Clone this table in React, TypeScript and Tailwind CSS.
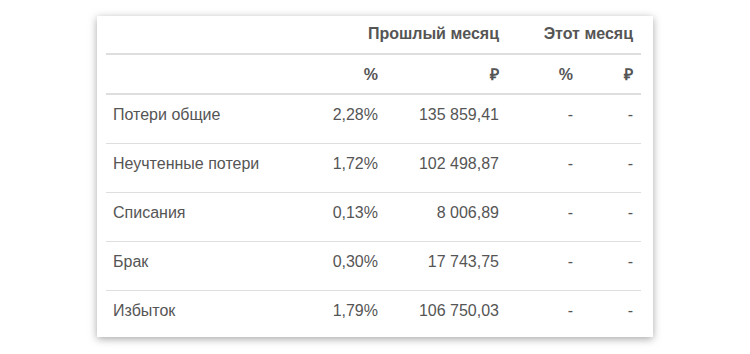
import React from "react";

const rows = [
  ["Потери общие", "2,28%", "135 859,41"],
  ["Неучтенные потери", "1,72%", "102 498,87"],
  ["Списания", "0,13%", "8 006,89"],
  ["Брак", "0,30%", "17 743,75"],
  ["Избыток", "1,79%", "106 750,03"],
];

export default function App() {
  return (
    <div
      className="w-[750px] h-[354px] bg-white overflow-hidden text-[#555]"
      style={{ fontFamily: '"Liberation Sans", Arial, sans-serif' }}
    >
      <div className="ml-[97px] mt-[16px] w-[556px] h-[321px] bg-white shadow-[0_2px_8px_rgba(0,0,0,0.35)] pl-[9px] pr-[12px]">
        <div className="text-[16px] leading-[20px]">
          <div className="flex h-[39px] pt-[8px] border-b-2 border-[#dedede] font-bold">
            <div className="flex-1" />
            <div className="w-[195px] text-right pr-[7px]">Прошлый месяц</div>
            <div className="w-[135px] text-right pr-[8px]">Этот месяц</div>
          </div>
          <div className="flex h-[40px] pt-[10px] border-b-2 border-[#dedede] font-bold">
            <div className="flex-1" />
            <div className="w-[75px] text-right pr-[8px]">%</div>
            <div className="w-[120px] text-right pr-[7px]">₽</div>
            <div className="w-[75px] text-right pr-[8px]">%</div>
            <div className="w-[60px] text-right pr-[8px]">₽</div>
          </div>
          {rows.map((r, i) => (
            <div
              key={i}
              className={
                "flex pt-[10px] " +
                (i < rows.length - 1
                  ? "h-[49px] border-b border-[#dedede]"
                  : "h-[45px]")
              }
            >
              <div className="flex-1 pl-[7px]">{r[0]}</div>
              <div className="w-[75px] text-right pr-[8px]">{r[1]}</div>
              <div className="w-[120px] text-right pr-[7px]">{r[2]}</div>
              <div className="w-[75px] text-right pr-[8px]">-</div>
              <div className="w-[60px] text-right pr-[8px]">-</div>
            </div>
          ))}
        </div>
      </div>
    </div>
  );
}
